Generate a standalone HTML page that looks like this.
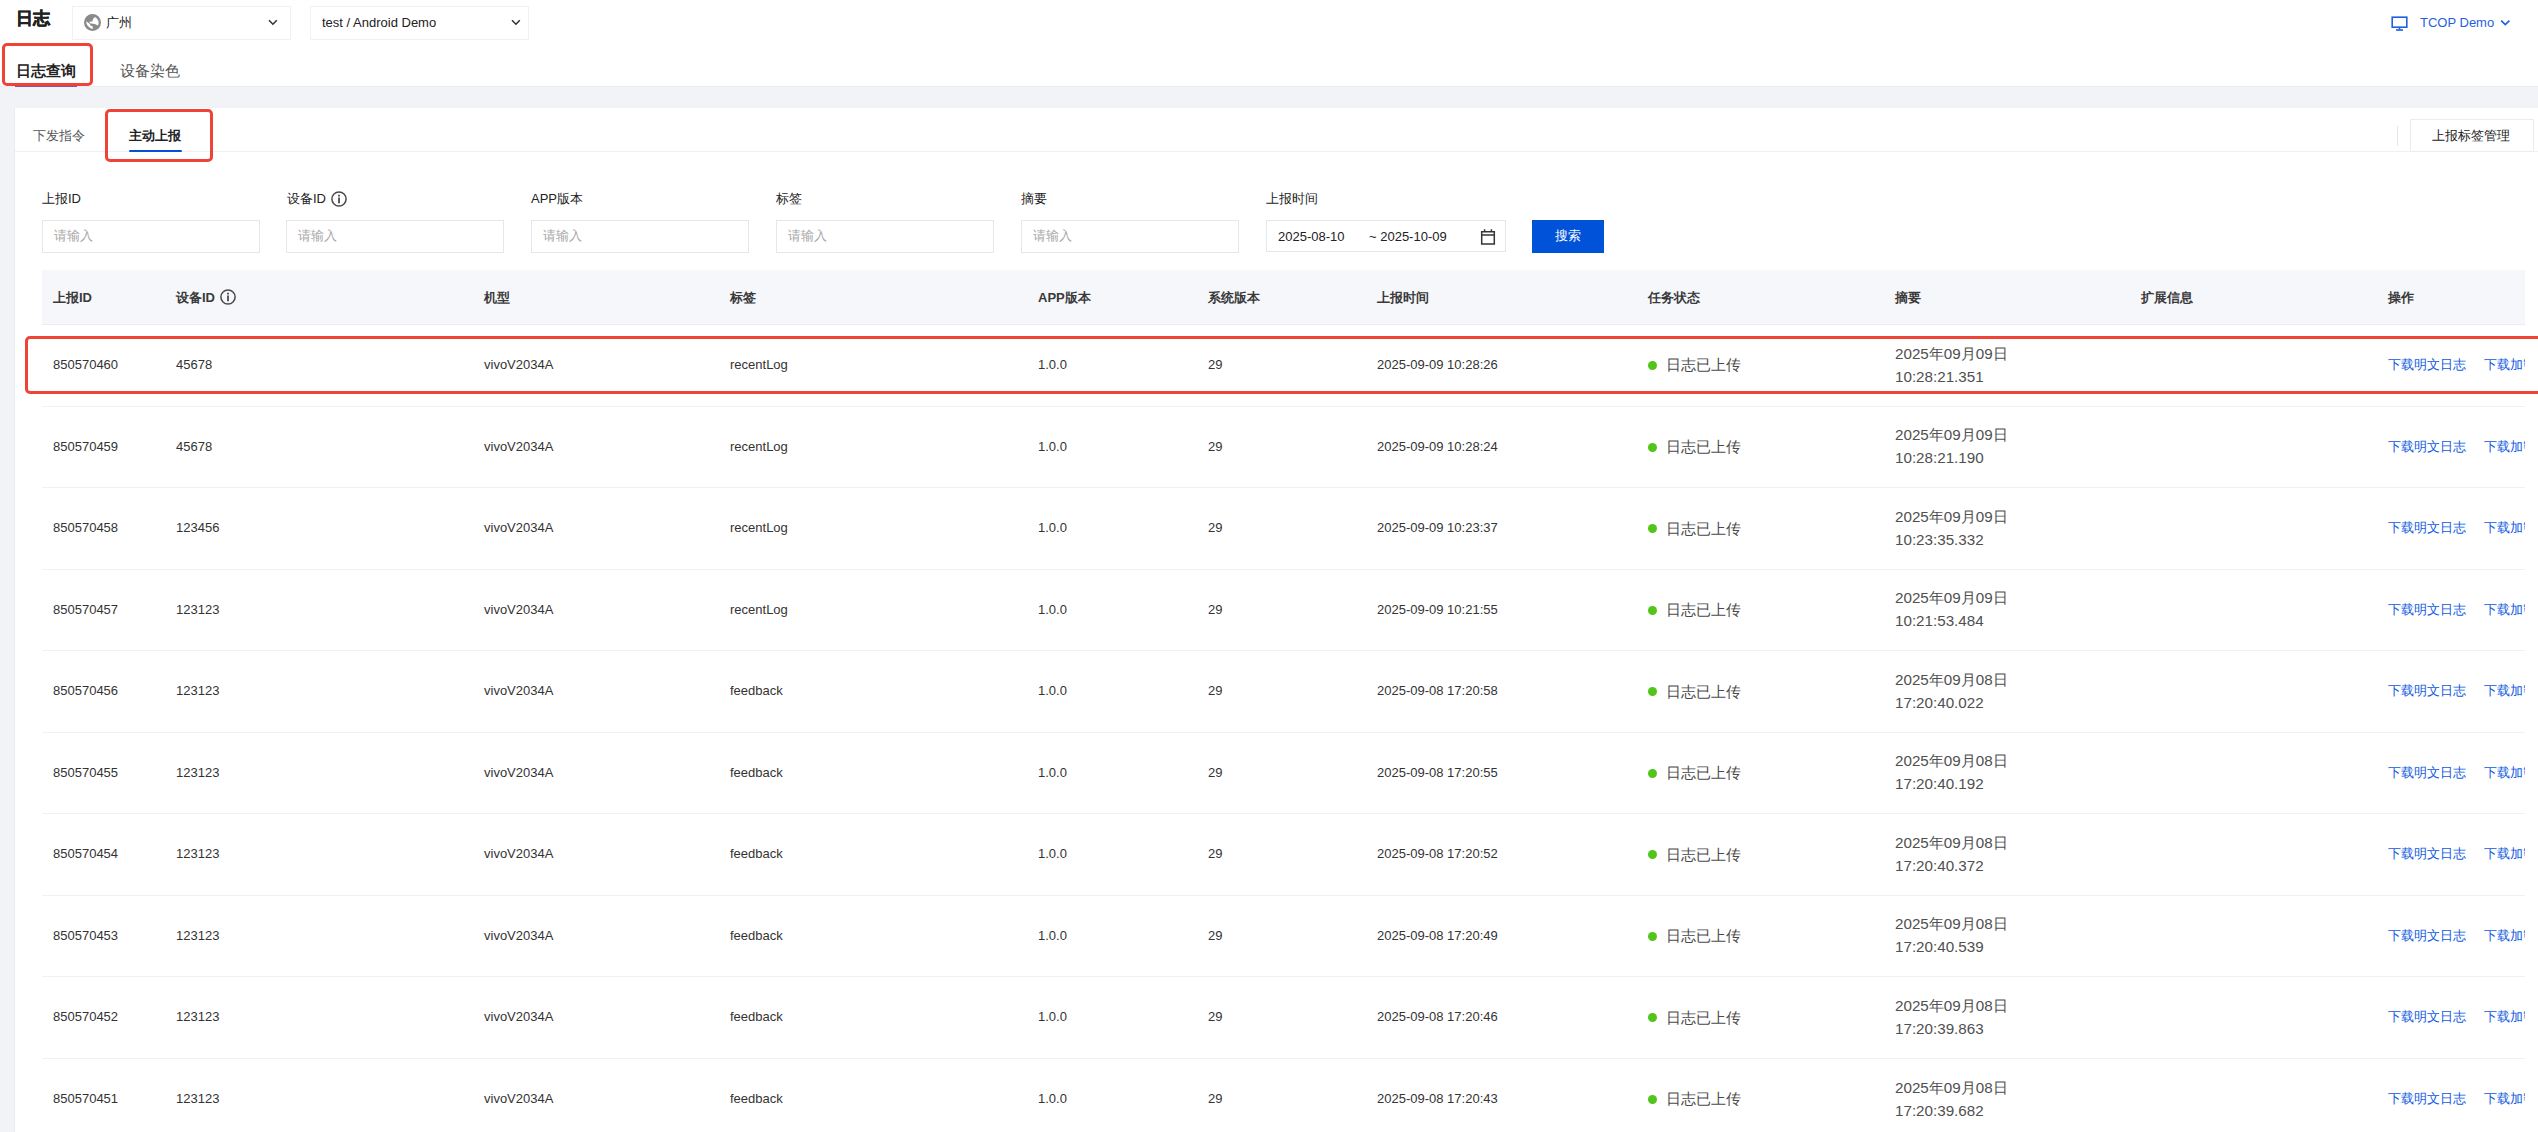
<!DOCTYPE html>
<html><head><meta charset="utf-8">
<style>
*{margin:0;padding:0;box-sizing:border-box}
html,body{width:2538px;height:1132px;overflow:hidden}
body{position:relative;background:#f2f3f6;font-family:"Liberation Sans",sans-serif;color:#222;font-size:13px;line-height:15px}
.a{position:absolute;white-space:nowrap}
#hdr{position:absolute;left:0;top:0;width:2538px;height:87px;background:#fff;border-bottom:1px solid #e9ecf2}
#card{position:absolute;left:15px;top:108px;width:2523px;height:1024px;background:#fff;box-shadow:-1px 0 0 #e9ebf0}
.sel{position:absolute;top:6px;height:34px;border:1px solid #eff1f5;background:#fff}
.chev{position:absolute;width:7px;height:7px;border-right:1.5px solid #333;border-bottom:1.5px solid #333;transform:rotate(45deg)}
.red{position:absolute;border:3px solid #ef4337;border-radius:5px}
.lbl{position:absolute;top:191px;font-size:13px;color:#222;white-space:nowrap}
.inp{position:absolute;top:220px;height:33px;width:218px;border:1px solid #e4e7ee;background:#fff}
.ph{position:absolute;left:11px;top:7px;font-size:13px;color:#a8a8a8;white-space:nowrap}
.th{position:absolute;top:290px;font-size:13px;font-weight:bold;color:#3a3a3a;white-space:nowrap}
.rowline{position:absolute;left:42px;width:2483px;height:1px;background:#eff1f5}
.td{position:absolute;font-size:13px;color:#333;white-space:nowrap}
.lnk{position:absolute;font-size:13px;color:#0f5ae0;white-space:nowrap}
.dot{position:absolute;width:9px;height:9px;border-radius:50%;background:#52c41a}
.st{position:absolute;font-size:15.4px;line-height:18px;color:#4a4a4a;white-space:nowrap}
.sm{position:absolute;font-size:15.2px;line-height:23px;color:#505050;white-space:nowrap}
.info{position:absolute;width:16px;height:16px;border:1.4px solid #555;border-radius:50%}
.info:before{content:"";position:absolute;left:5.9px;top:2.6px;width:1.6px;height:1.6px;background:#555}
.info:after{content:"";position:absolute;left:5.9px;top:5.4px;width:1.6px;height:6px;background:#555}
</style></head><body>
<div id="hdr">
  <div class="a" style="left:16px;top:8px;font-size:17px;line-height:22px;font-weight:bold;color:#222;-webkit-text-stroke:0.5px #222">日志</div>
  <div class="sel" style="left:72px;width:219px">
    <svg style="position:absolute;left:11px;top:7px" width="17" height="17" viewBox="0 0 17 17"><circle cx="8.5" cy="8.5" r="8.5" fill="#8a8a8a"/><path d="M2 7.6C2.5 11 5 14.2 8.7 15L8.9 12.6C7.3 12.3 6.3 11.4 5.6 9.8C4.9 9 3.7 8.5 2 7.6Z" fill="#fff"/><path d="M10.9 3A6.2 6.2 0 0 1 13.9 11.6L11.3 10.2L10.6 9.9L5.9 9.2L5.4 8.3L5.9 7.8L8.7 7.3L8.7 5.4L10.2 3.8Z" fill="#fff"/></svg>
    <div class="a" style="left:33px;top:7px;font-size:13.4px;line-height:17px;color:#222">广州</div>
    <svg style="position:absolute;left:195px;top:12px" width="11" height="8" viewBox="0 0 11 8"><path d="M1 1.3L4.9 5.2L8.8 1.3" fill="none" stroke="#333" stroke-width="1.6"/></svg>
  </div>
  <div class="sel" style="left:310px;width:219px">
    <div class="a" style="left:11px;top:7px;font-size:13px;line-height:17px;color:#222">test / Android Demo</div>
    <svg style="position:absolute;left:200px;top:12px" width="11" height="8" viewBox="0 0 11 8"><path d="M1 1.3L4.9 5.2L8.8 1.3" fill="none" stroke="#333" stroke-width="1.6"/></svg>
  </div>
  <svg style="position:absolute;left:2390px;top:16px" width="19" height="16" viewBox="0 0 19 16"><rect x="2.2" y="1.2" width="14.6" height="10" fill="none" stroke="#1f5fe0" stroke-width="1.6"/><rect x="8.7" y="11" width="1.6" height="2.5" fill="#1f5fe0"/><rect x="6" y="13.2" width="7" height="1.6" fill="#1f5fe0"/></svg>
  <div class="a" style="left:2420px;top:15px;font-size:13px;line-height:15px;color:#1f5fe0">TCOP Demo</div>
  <svg style="position:absolute;left:2500px;top:19px" width="11" height="8" viewBox="0 0 11 8"><path d="M1.2 1.6L5.3 5.6L9.4 1.6" fill="none" stroke="#1f5fe0" stroke-width="1.6"/></svg>

  <div class="a" style="left:16px;top:62px;font-size:15px;line-height:18px;font-weight:bold;color:#222">日志查询</div>
  <div class="a" style="left:15px;top:86px;width:62px;height:1px;background:#7a56a8"></div>
  <div class="a" style="left:120px;top:62px;font-size:15px;line-height:18px;color:#555">设备染色</div>
</div>
<div class="red" style="left:2px;top:43px;width:91px;height:43px"></div>

<div id="card">
  <div class="a" style="left:0;top:43px;width:2523px;height:1px;background:#eef0f4"></div>
  <div class="a" style="left:18px;top:20px;font-size:13px;line-height:16px;color:#555">下发指令</div>
  <div class="a" style="left:114px;top:20px;font-size:13px;line-height:16px;font-weight:bold;color:#222">主动上报</div>
  <div class="a" style="left:114px;top:42px;width:53px;height:2.4px;background:#0052d9;border-radius:1px"></div>
  <div class="a" style="left:2382px;top:18px;width:1px;height:20px;background:#e3e6ed"></div>
  <div class="a" style="left:2395px;top:11px;width:124px;height:33px;border:1px solid #e9ecf1;background:#fff"></div>
  <div class="a" style="left:2417px;top:20px;font-size:13.2px;line-height:15px;color:#222">上报标签管理</div>
</div>
<div class="red" style="left:105px;top:109px;width:108px;height:53px"></div>

<div class="lbl" style="left:42px">上报ID</div>
<div class="lbl" style="left:287px">设备ID</div><svg style="position:absolute;left:331px;top:191px" width="16" height="16" viewBox="0 0 16 16"><circle cx="8" cy="8" r="7.1" fill="none" stroke="#4a4a4a" stroke-width="1.5"/><rect x="7.1" y="3.7" width="1.8" height="1.8" fill="#4a4a4a"/><rect x="7.1" y="6.5" width="1.8" height="5.8" fill="#4a4a4a"/></svg>
<div class="lbl" style="left:531px">APP版本</div>
<div class="lbl" style="left:776px">标签</div>
<div class="lbl" style="left:1021px">摘要</div>
<div class="lbl" style="left:1266px">上报时间</div>

<div class="inp" style="left:42px"><div class="ph">请输入</div></div>
<div class="inp" style="left:286px"><div class="ph">请输入</div></div>
<div class="inp" style="left:531px"><div class="ph">请输入</div></div>
<div class="inp" style="left:776px"><div class="ph">请输入</div></div>
<div class="inp" style="left:1021px"><div class="ph">请输入</div></div>
<div class="inp" style="left:1266px;width:240px;height:32px">
  <div class="a" style="left:11px;top:8px;font-size:13px;color:#222">2025-08-10</div>
  <div class="a" style="left:102px;top:8px;font-size:13px;color:#222">~ 2025-10-09</div>
  <svg style="position:absolute;left:213px;top:7px" width="16" height="17" viewBox="0 0 16 17"><path d="M1.7 3.7h12.6v12.2H1.7z M1.7 7h12.6 M4.6 1.2v3 M11.4 1.2v3" fill="none" stroke="#333" stroke-width="1.5"/></svg>
</div>
<div class="a" style="left:1532px;top:220px;width:72px;height:33px;background:#0052d9"></div>
<div class="a" style="left:1555px;top:228px;font-size:13px;line-height:15px;color:#fff">搜索</div>

<div class="a" style="left:42px;top:270px;width:2483px;height:55px;background:#f6f7fa;border-bottom:1px solid #e9ecf1"></div>
<div class="th" style="left:53px">上报ID</div>
<div class="th" style="left:176px">设备ID</div><svg style="position:absolute;left:220px;top:289px" width="16" height="16" viewBox="0 0 16 16"><circle cx="8" cy="8" r="7.1" fill="none" stroke="#4a4a4a" stroke-width="1.5"/><rect x="7.1" y="3.7" width="1.8" height="1.8" fill="#4a4a4a"/><rect x="7.1" y="6.5" width="1.8" height="5.8" fill="#4a4a4a"/></svg>
<div class="th" style="left:484px">机型</div>
<div class="th" style="left:730px">标签</div>
<div class="th" style="left:1038px">APP版本</div>
<div class="th" style="left:1208px">系统版本</div>
<div class="th" style="left:1377px">上报时间</div>
<div class="th" style="left:1648px">任务状态</div>
<div class="th" style="left:1895px">摘要</div>
<div class="th" style="left:2141px">扩展信息</div>
<div class="th" style="left:2388px">操作</div>

<div class="td" style="left:53px;top:357px">850570460</div>
<div class="td" style="left:176px;top:357px">45678</div>
<div class="td" style="left:484px;top:357px">vivoV2034A</div>
<div class="td" style="left:730px;top:357px">recentLog</div>
<div class="td" style="left:1038px;top:357px">1.0.0</div>
<div class="td" style="left:1208px;top:357px">29</div>
<div class="td" style="left:1377px;top:357px">2025-09-09 10:28:26</div>
<div class="dot" style="left:1648px;top:361px"></div>
<div class="st" style="left:1666px;top:356px">日志已上传</div>
<div class="sm" style="left:1895px;top:342px">2025年09月09日<br>10:28:21.351</div>
<div class="lnk" style="left:2388px;top:357px">下载明文日志</div>
<div class="lnk" style="left:2484px;top:357px;width:41px;overflow:hidden">下载加密日志</div>
<div class="rowline" style="top:406px"></div>
<div class="td" style="left:53px;top:439px">850570459</div>
<div class="td" style="left:176px;top:439px">45678</div>
<div class="td" style="left:484px;top:439px">vivoV2034A</div>
<div class="td" style="left:730px;top:439px">recentLog</div>
<div class="td" style="left:1038px;top:439px">1.0.0</div>
<div class="td" style="left:1208px;top:439px">29</div>
<div class="td" style="left:1377px;top:439px">2025-09-09 10:28:24</div>
<div class="dot" style="left:1648px;top:443px"></div>
<div class="st" style="left:1666px;top:438px">日志已上传</div>
<div class="sm" style="left:1895px;top:423px">2025年09月09日<br>10:28:21.190</div>
<div class="lnk" style="left:2388px;top:439px">下载明文日志</div>
<div class="lnk" style="left:2484px;top:439px;width:41px;overflow:hidden">下载加密日志</div>
<div class="rowline" style="top:487px"></div>
<div class="td" style="left:53px;top:520px">850570458</div>
<div class="td" style="left:176px;top:520px">123456</div>
<div class="td" style="left:484px;top:520px">vivoV2034A</div>
<div class="td" style="left:730px;top:520px">recentLog</div>
<div class="td" style="left:1038px;top:520px">1.0.0</div>
<div class="td" style="left:1208px;top:520px">29</div>
<div class="td" style="left:1377px;top:520px">2025-09-09 10:23:37</div>
<div class="dot" style="left:1648px;top:524px"></div>
<div class="st" style="left:1666px;top:520px">日志已上传</div>
<div class="sm" style="left:1895px;top:505px">2025年09月09日<br>10:23:35.332</div>
<div class="lnk" style="left:2388px;top:520px">下载明文日志</div>
<div class="lnk" style="left:2484px;top:520px;width:41px;overflow:hidden">下载加密日志</div>
<div class="rowline" style="top:569px"></div>
<div class="td" style="left:53px;top:602px">850570457</div>
<div class="td" style="left:176px;top:602px">123123</div>
<div class="td" style="left:484px;top:602px">vivoV2034A</div>
<div class="td" style="left:730px;top:602px">recentLog</div>
<div class="td" style="left:1038px;top:602px">1.0.0</div>
<div class="td" style="left:1208px;top:602px">29</div>
<div class="td" style="left:1377px;top:602px">2025-09-09 10:21:55</div>
<div class="dot" style="left:1648px;top:606px"></div>
<div class="st" style="left:1666px;top:601px">日志已上传</div>
<div class="sm" style="left:1895px;top:586px">2025年09月09日<br>10:21:53.484</div>
<div class="lnk" style="left:2388px;top:602px">下载明文日志</div>
<div class="lnk" style="left:2484px;top:602px;width:41px;overflow:hidden">下载加密日志</div>
<div class="rowline" style="top:650px"></div>
<div class="td" style="left:53px;top:683px">850570456</div>
<div class="td" style="left:176px;top:683px">123123</div>
<div class="td" style="left:484px;top:683px">vivoV2034A</div>
<div class="td" style="left:730px;top:683px">feedback</div>
<div class="td" style="left:1038px;top:683px">1.0.0</div>
<div class="td" style="left:1208px;top:683px">29</div>
<div class="td" style="left:1377px;top:683px">2025-09-08 17:20:58</div>
<div class="dot" style="left:1648px;top:687px"></div>
<div class="st" style="left:1666px;top:683px">日志已上传</div>
<div class="sm" style="left:1895px;top:668px">2025年09月08日<br>17:20:40.022</div>
<div class="lnk" style="left:2388px;top:683px">下载明文日志</div>
<div class="lnk" style="left:2484px;top:683px;width:41px;overflow:hidden">下载加密日志</div>
<div class="rowline" style="top:732px"></div>
<div class="td" style="left:53px;top:765px">850570455</div>
<div class="td" style="left:176px;top:765px">123123</div>
<div class="td" style="left:484px;top:765px">vivoV2034A</div>
<div class="td" style="left:730px;top:765px">feedback</div>
<div class="td" style="left:1038px;top:765px">1.0.0</div>
<div class="td" style="left:1208px;top:765px">29</div>
<div class="td" style="left:1377px;top:765px">2025-09-08 17:20:55</div>
<div class="dot" style="left:1648px;top:769px"></div>
<div class="st" style="left:1666px;top:764px">日志已上传</div>
<div class="sm" style="left:1895px;top:749px">2025年09月08日<br>17:20:40.192</div>
<div class="lnk" style="left:2388px;top:765px">下载明文日志</div>
<div class="lnk" style="left:2484px;top:765px;width:41px;overflow:hidden">下载加密日志</div>
<div class="rowline" style="top:813px"></div>
<div class="td" style="left:53px;top:846px">850570454</div>
<div class="td" style="left:176px;top:846px">123123</div>
<div class="td" style="left:484px;top:846px">vivoV2034A</div>
<div class="td" style="left:730px;top:846px">feedback</div>
<div class="td" style="left:1038px;top:846px">1.0.0</div>
<div class="td" style="left:1208px;top:846px">29</div>
<div class="td" style="left:1377px;top:846px">2025-09-08 17:20:52</div>
<div class="dot" style="left:1648px;top:850px"></div>
<div class="st" style="left:1666px;top:846px">日志已上传</div>
<div class="sm" style="left:1895px;top:831px">2025年09月08日<br>17:20:40.372</div>
<div class="lnk" style="left:2388px;top:846px">下载明文日志</div>
<div class="lnk" style="left:2484px;top:846px;width:41px;overflow:hidden">下载加密日志</div>
<div class="rowline" style="top:895px"></div>
<div class="td" style="left:53px;top:928px">850570453</div>
<div class="td" style="left:176px;top:928px">123123</div>
<div class="td" style="left:484px;top:928px">vivoV2034A</div>
<div class="td" style="left:730px;top:928px">feedback</div>
<div class="td" style="left:1038px;top:928px">1.0.0</div>
<div class="td" style="left:1208px;top:928px">29</div>
<div class="td" style="left:1377px;top:928px">2025-09-08 17:20:49</div>
<div class="dot" style="left:1648px;top:932px"></div>
<div class="st" style="left:1666px;top:927px">日志已上传</div>
<div class="sm" style="left:1895px;top:912px">2025年09月08日<br>17:20:40.539</div>
<div class="lnk" style="left:2388px;top:928px">下载明文日志</div>
<div class="lnk" style="left:2484px;top:928px;width:41px;overflow:hidden">下载加密日志</div>
<div class="rowline" style="top:976px"></div>
<div class="td" style="left:53px;top:1009px">850570452</div>
<div class="td" style="left:176px;top:1009px">123123</div>
<div class="td" style="left:484px;top:1009px">vivoV2034A</div>
<div class="td" style="left:730px;top:1009px">feedback</div>
<div class="td" style="left:1038px;top:1009px">1.0.0</div>
<div class="td" style="left:1208px;top:1009px">29</div>
<div class="td" style="left:1377px;top:1009px">2025-09-08 17:20:46</div>
<div class="dot" style="left:1648px;top:1013px"></div>
<div class="st" style="left:1666px;top:1009px">日志已上传</div>
<div class="sm" style="left:1895px;top:994px">2025年09月08日<br>17:20:39.863</div>
<div class="lnk" style="left:2388px;top:1009px">下载明文日志</div>
<div class="lnk" style="left:2484px;top:1009px;width:41px;overflow:hidden">下载加密日志</div>
<div class="rowline" style="top:1058px"></div>
<div class="td" style="left:53px;top:1091px">850570451</div>
<div class="td" style="left:176px;top:1091px">123123</div>
<div class="td" style="left:484px;top:1091px">vivoV2034A</div>
<div class="td" style="left:730px;top:1091px">feedback</div>
<div class="td" style="left:1038px;top:1091px">1.0.0</div>
<div class="td" style="left:1208px;top:1091px">29</div>
<div class="td" style="left:1377px;top:1091px">2025-09-08 17:20:43</div>
<div class="dot" style="left:1648px;top:1095px"></div>
<div class="st" style="left:1666px;top:1090px">日志已上传</div>
<div class="sm" style="left:1895px;top:1076px">2025年09月08日<br>17:20:39.682</div>
<div class="lnk" style="left:2388px;top:1091px">下载明文日志</div>
<div class="lnk" style="left:2484px;top:1091px;width:41px;overflow:hidden">下载加密日志</div>

<div class="red" style="left:25px;top:336px;width:2530px;height:58px"></div>
</body></html>
